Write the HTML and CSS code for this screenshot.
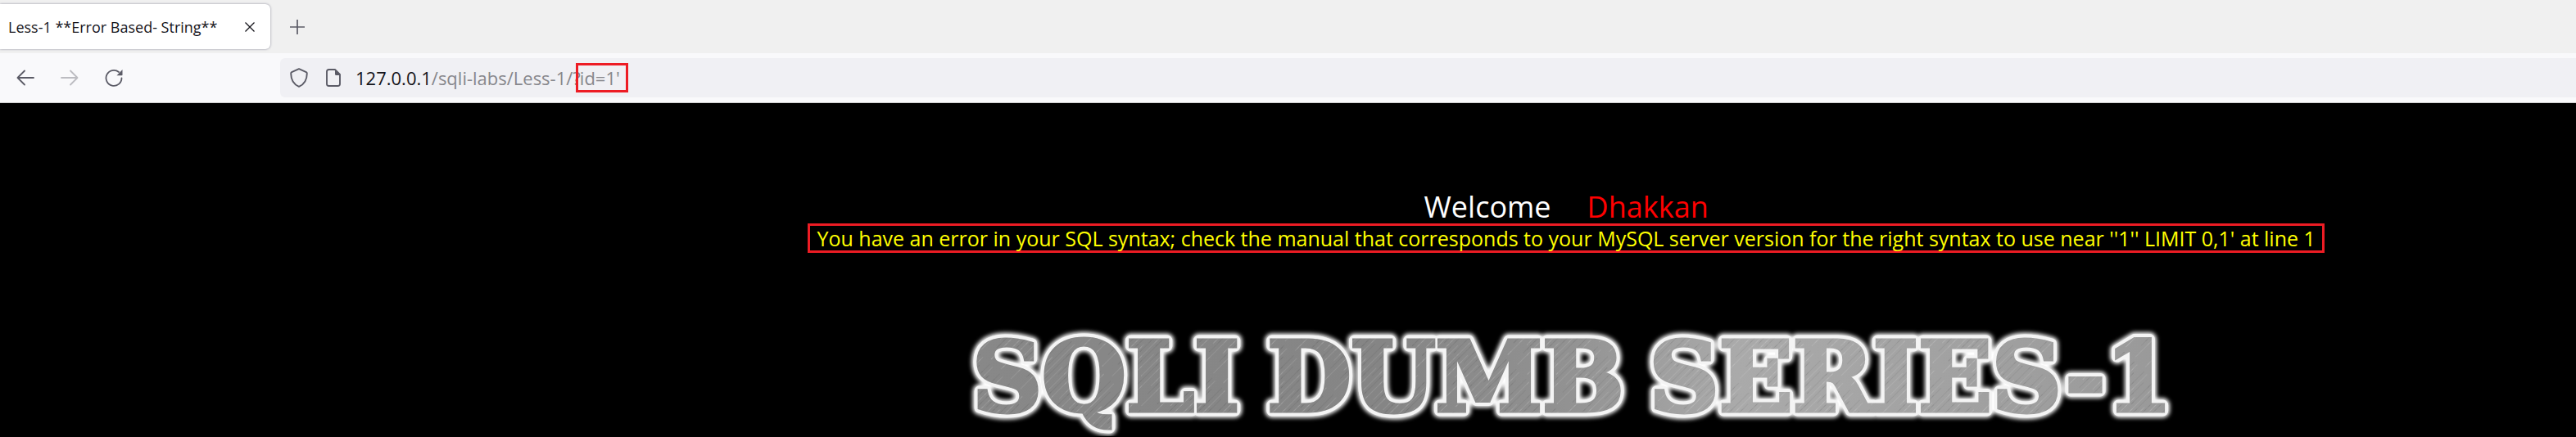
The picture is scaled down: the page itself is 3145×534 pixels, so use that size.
FILE: index.html
```html
<!DOCTYPE html>
<html lang="en">
<head>
<meta charset="utf-8">
<title>Less-1 **Error Based- String**</title>
<link rel="stylesheet" href="styles.css">
</head>
<body>
<header class="browser">
  <div class="tabs">
    <div class="tab">
      <span class="tab-title">Less-1 **Error Based- String**</span>
      <button class="icon-button close" aria-label="Close tab">
        <svg width="12" height="12" viewBox="0 0 12 12"><path d="M.5.5l11 11M11.5.5l-11 11" fill="none" stroke="#15141a" stroke-width="1.3"/></svg>
      </button>
    </div>
    <button class="icon-button new-tab" aria-label="New tab">
      <svg width="18" height="18" viewBox="0 0 18 18"><path d="M9 0v18M0 9h18" fill="none" stroke="#5b5b66" stroke-width="1.7"/></svg>
    </button>
  </div>
  <nav class="toolbar">
    <div class="nav-buttons">
      <button class="icon-button" aria-label="Back">
        <svg width="22" height="20" viewBox="0 0 22 20"><path d="M10 1.500L1.500 10l8.500 8.500M1.500 10H21" fill="none" stroke="#5b5b66" stroke-width="1.800" stroke-linecap="round" stroke-linejoin="round"/></svg>
      </button>
      <button class="icon-button" aria-label="Forward" disabled>
        <svg width="22" height="20" viewBox="0 0 22 20"><path d="M12 1.500l8.500 8.500-8.500 8.500M20.500 10H1" fill="none" stroke="#bcbcc1" stroke-width="1.800" stroke-linecap="round" stroke-linejoin="round"/></svg>
      </button>
      <button class="icon-button" aria-label="Reload">
        <svg width="22" height="22" viewBox="0 0 22 22"><path d="M20.500 11.500A9.500 9.500 0 1 1 17 4" fill="none" stroke="#5b5b66" stroke-width="1.800" stroke-linecap="round"/><path d="M21.500 1v6.500q0 .8-.8.8H14.500z" fill="#5b5b66"/></svg>
      </button>
    </div>
    <div class="address">
      <svg class="shield" width="22" height="24" viewBox="0 0 22 24"><path d="M11 1.200l8.800 4q1 .5 1 1.500C20.800 14.500 17.500 20 11 22.800 4.500 20 1.200 14.500 1.200 6.700q0-1 1-1.500z" fill="none" stroke="#5b5b66" stroke-width="1.900" stroke-linejoin="round"/></svg>
      <svg class="doc" width="18" height="22" viewBox="0 0 18 22"><path d="M11 1H3.500Q1 1 1 3.500v15Q1 21 3.500 21h11q2.500 0 2.500-2.500V7z" fill="none" stroke="#5b5b66" stroke-width="1.900" stroke-linejoin="round"/><path d="M11 1l6 6v1h-4.500Q11 8 11 6.500z" fill="#5b5b66"/></svg>
      <a class="url" href="#"><span class="host">127.0.0.1</span>/sqli-labs/Less-1/?<span class="marked">id=1'</span></a>
    </div>
  </nav>
</header>
<main class="page">
  <p class="greeting"><span>Welcome</span><span class="name">Dhakkan</span></p>
  <p class="error">You have an error in your SQL syntax; check the manual that corresponds to your MySQL server version for the right syntax to use near ''1'' LIMIT 0,1' at line 1</p>
  <svg class="banner" width="1500" height="144" viewBox="1163 390 1500 144" role="img" aria-label="SQLI DUMB SERIES-1">
    <defs>
      <linearGradient id="metal" gradientUnits="userSpaceOnUse" x1="1180" y1="0" x2="2650" y2="0">
        <stop offset="0" stop-color="#888"/><stop offset=".35" stop-color="#858585"/><stop offset=".5" stop-color="#929292"/><stop offset=".64" stop-color="#aaa"/><stop offset="1" stop-color="#999"/>
      </linearGradient>
      <pattern id="brush" width="17" height="90" patternUnits="userSpaceOnUse" patternTransform="rotate(45)">
        <path d="M2.500 0v60M11.500 30v55" stroke="#fff" stroke-opacity=".1"/><path d="M6.500 10v60M14.500 0v40" stroke="#000" stroke-opacity=".06"/>
      </pattern>
      <filter id="glow" x="-5%" y="-20%" width="110%" height="140%"><feGaussianBlur stdDeviation="2.500"/></filter>
      <g id="words"><text x="1351" y="503">SQLI</text><text x="1766" y="503">DUMB</text><text x="2334" y="503">SERIES-1</text></g>
    </defs>
    <g class="lettering">
      <use href="#words" fill="#fff" stroke="#fff" stroke-width="17" stroke-linejoin="round" filter="url(#glow)"/>
      <use href="#words" fill="#fff" stroke="#f4f4f4" stroke-width="13" stroke-linejoin="round"/>
      <use href="#words" fill="url(#metal)" stroke="url(#metal)" stroke-width="5"/>
      <use href="#words" fill="url(#brush)" stroke="url(#brush)" stroke-width="5"/>
    </g>
  </svg>
</main>
</body>
</html>
```
FILE: styles.css
```css
* { box-sizing: border-box; }
body { margin: 0; background: #000; font-family: "Open Sans", "Noto Sans", sans-serif; overflow-x: hidden; }
.icon-button { display: flex; align-items: center; justify-content: center; padding: 0; border: 0; background: none; }
.tabs { display: flex; align-items: center; height: 65px; background: #f0f0f0; }
.tab { display: flex; align-items: center; justify-content: space-between; width: 330px; height: 55px; padding: 0 19px 0 10px; background: #fff; border-radius: 0 6px 6px 0; box-shadow: 0 0 3px #8f8f9d; }
.tab-title { font-size: 18px; color: #15141a; white-space: nowrap; }
.new-tab { margin-left: 24px; }
.toolbar { display: flex; align-items: center; height: 61px; background: #f9f9fb; border-bottom: 1px solid #ccc; }
.nav-buttons { display: flex; align-items: center; gap: 32px; width: 342px; padding-left: 20px; }
.address { display: flex; align-items: center; flex: 1; height: 48px; padding-left: 12px; background: #f0f0f4; border-radius: 6px 0 0 6px; }
.doc { margin-left: 22px; }
.url { margin-left: 18px; font-size: 22px; line-height: 30px; color: #87878c; text-decoration: none; white-space: nowrap; }
.host { color: #15141a; }
.marked { display: inline-block; margin-left: -6px; padding: 0 7px 0 2px; border: 3px solid #ed1c24; }
.page { display: flex; flex-direction: column; align-items: center; padding: 107px 0 0 21.6%; }
.greeting { display: flex; gap: 44px; margin: 0; font-size: 36px; line-height: 40px; color: #fff; }
.name { color: #f00; }
.error { margin: 0; padding: 0 8px; border: 3px solid #ed1c24; font-size: 25px; line-height: 30px; color: #ff0; white-space: nowrap; }
.banner { display: block; margin-top: 80px; }
.lettering { font-family: "DejaVu Serif", serif; font-weight: bold; font-size: 118px; text-anchor: middle; }
```
